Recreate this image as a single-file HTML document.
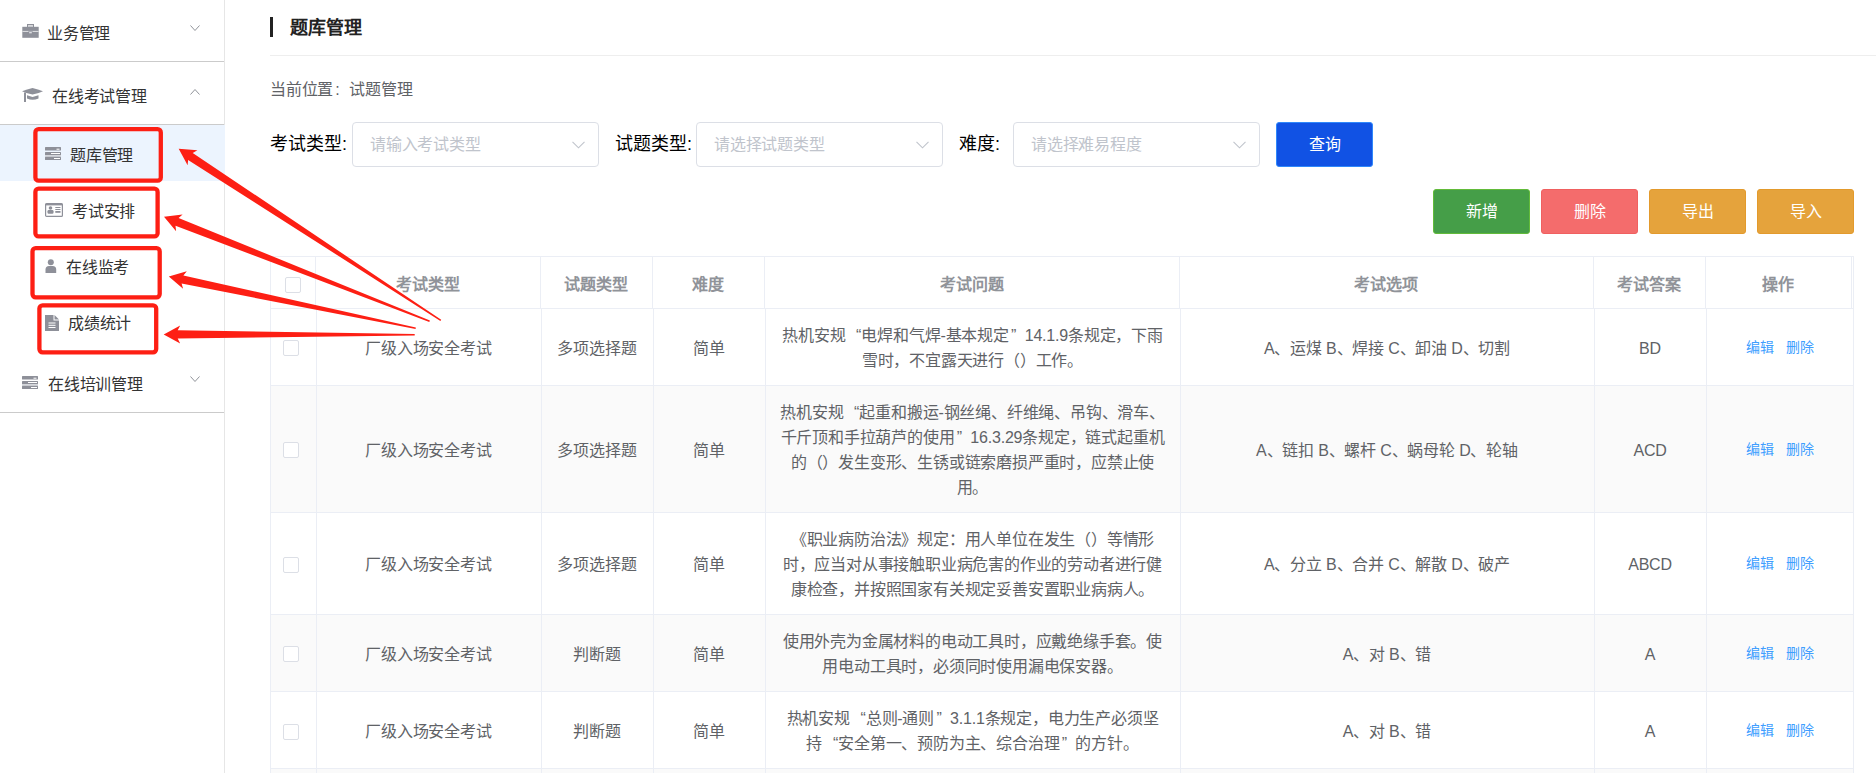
<!DOCTYPE html><html lang="zh-CN"><head><meta charset="utf-8"><title>题库管理</title><style>
*{margin:0;padding:0;box-sizing:border-box}
html,body{width:1876px;height:781px;overflow:hidden;background:#fff}
body{position:relative;font-family:"Liberation Sans",sans-serif;color:#333}
.a{position:absolute;white-space:nowrap}
.ln{position:absolute;background:#e6e6e6}
.t16{font-size:16px;line-height:20px}
.side{color:#333;font-size:16px;line-height:20px;letter-spacing:-0.25px}
.lab{font-size:18px;color:#000;line-height:24px}
.inp{position:absolute;top:122px;height:45px;width:247px;border:1px solid #dcdfe6;border-radius:4px;background:#fff}
.inp span{position:absolute;left:17px;top:12px;letter-spacing:-0.2px;font-size:16px;line-height:20px;color:#c0c4cc}
.inp svg{position:absolute;right:13px;top:18px}
.btn{position:absolute;color:#fff;font-size:16px;line-height:20px;text-align:center;border-radius:3px}
.th{position:absolute;font-size:16px;font-weight:bold;color:#909399;line-height:25px;text-align:center}
.td{position:absolute;font-size:16px;color:#606266;line-height:25px;text-align:center;white-space:nowrap;letter-spacing:-0.2px}
.hl{position:absolute;height:1px;background:#ebeef5}
.vl{position:absolute;width:1px;background:#ebeef5}
.cb{position:absolute;width:16px;height:16px;border:1px solid #dcdfe6;border-radius:2px;background:#fff}
.op{position:absolute;font-size:14px;line-height:18px;color:#409eff}
.q{display:inline-block;width:16px;letter-spacing:0}
.qr{position:relative;left:-3px}
.ql{text-align:right}
</style></head><body>
<div class="ln" style="left:224px;top:0;width:1px;height:773px;background:#e6e6e6"></div>
<div class="ln" style="left:0;top:61px;width:224px;height:1px;background:#cbcbcb"></div>
<div class="ln" style="left:0;top:124px;width:224px;height:1px;background:#cbcbcb"></div>
<div class="ln" style="left:0;top:125px;width:225px;height:56px;background:#ecf4fe"></div>
<div class="ln" style="left:0;top:412px;width:224px;height:1px;background:#cbcbcb"></div>
<svg class="a" style="left:22px;top:24px" width="17" height="14" viewBox="0 0 17 14"><path d="M5 0 H12 V3 H10.8 V1.2 H6.2 V3 H5z" fill="#8e9099"/><rect x="6.2" y="1.2" width="4.6" height="1.8" fill="#d8d9dc"/><rect x="0.3" y="2.8" width="16.4" height="11" fill="#8e9099"/><rect x="0.3" y="6.9" width="16.4" height="1.1" fill="#d9dadd"/><rect x="6.2" y="7.4" width="4.6" height="2.6" fill="#8e9099"/><rect x="7.2" y="8.1" width="2.6" height="1.2" fill="#e6e7ea"/></svg>
<div class="a side" style="left:47px;top:24px">业务管理</div>
<svg class="a" style="left:190px;top:25px" width="10" height="6" viewBox="0 0 10 6"><path d="M0.5 0.5 L5.0 5.5 L9.5 0.5" fill="none" stroke="#909399" stroke-width="1"/></svg>
<svg class="a" style="left:22px;top:87px" width="22" height="16" viewBox="0 0 22 16"><path d="M10.5 1 Q16 2.5 21 4.2 Q16 6.6 10.5 7.6 Q5 6.6 0 4.2 Q5 2.5 10.5 1z" fill="#8e9099"/><path d="M5 8.2 L10.5 10 L16.5 8.2 V11.5 Q10.5 14 5 11.5z" fill="#8e9099"/><rect x="2" y="5.5" width="2" height="9.5" fill="#8e9099"/></svg>
<div class="a side" style="left:52px;top:87px">在线考试管理</div>
<svg class="a" style="left:190px;top:89px" width="10" height="6" viewBox="0 0 10 6"><path d="M0.5 5.5 L5.0 0.5 L9.5 5.5" fill="none" stroke="#909399" stroke-width="1"/></svg>
<svg class="a" style="left:45px;top:147px" width="16" height="13" viewBox="0 0 16 13"><rect x="0" y="0" width="16" height="3.6" rx="0.5" fill="#8e9099"/><rect x="0" y="5" width="16" height="3" rx="0.5" fill="#8e9099"/><rect x="0" y="8" width="16" height="1.8" fill="#d5d7dc"/><rect x="0" y="9.8" width="16" height="3.2" rx="0.5" fill="#8e9099"/><rect x="11.5" y="1.7" width="3" height="1" fill="#fff"/><rect x="6.0" y="6" width="9" height="1" fill="#fff"/><rect x="9.0" y="11" width="6" height="1" fill="#fff"/></svg>
<div class="a side" style="left:70px;top:146px">题库管理</div>
<svg class="a" style="left:45px;top:203px" width="18" height="14" viewBox="0 0 18 14"><rect x="0.6" y="0.6" width="16.8" height="12.8" rx="1" fill="none" stroke="#8e9099" stroke-width="1.2"/><rect x="0.6" y="0.6" width="16.8" height="1.8" fill="#8e9099"/><circle cx="5.5" cy="5" r="1.8" fill="#8e9099"/><rect x="2.5" y="7" width="6" height="3.8" rx="1.2" fill="#8e9099"/><rect x="10.3" y="4" width="5.2" height="1" fill="#8e9099"/><rect x="10.3" y="6" width="5.2" height="1" fill="#8e9099"/><rect x="10.3" y="8" width="5.2" height="1.8" fill="#8e9099"/></svg>
<div class="a side" style="left:72px;top:202px">考试安排</div>
<svg class="a" style="left:45px;top:259px" width="12" height="14" viewBox="0 0 12 14"><circle cx="5.8" cy="3.2" r="3" fill="#8e9099"/><path d="M0.5 14 V10.5 Q0.5 7 4 7 H7.6 Q11.2 7 11.2 10.5 V14z" fill="#8e9099"/></svg>
<div class="a side" style="left:66px;top:258px">在线监考</div>
<svg class="a" style="left:45px;top:315px" width="14" height="16" viewBox="0 0 14 16"><path d="M0 0 H8.5 V5.5 H14 V16 H0z" fill="#8e9099"/><path d="M9.5 0 L14 4.5 H9.5z" fill="#8e9099"/><rect x="3.5" y="7.5" width="7" height="1" fill="#fff"/><rect x="3.5" y="9.8" width="7" height="1" fill="#fff"/><rect x="3.5" y="12" width="7" height="1" fill="#fff"/></svg>
<div class="a side" style="left:68px;top:314px">成绩统计</div>
<svg class="a" style="left:22px;top:376px" width="16" height="13" viewBox="0 0 16 13"><rect x="0" y="0" width="16" height="3.6" rx="0.5" fill="#8e9099"/><rect x="0" y="5" width="16" height="3" rx="0.5" fill="#8e9099"/><rect x="0" y="8" width="16" height="1.8" fill="#d5d7dc"/><rect x="0" y="9.8" width="16" height="3.2" rx="0.5" fill="#8e9099"/><rect x="11.5" y="1.7" width="3" height="1" fill="#fff"/><rect x="6.0" y="6" width="9" height="1" fill="#fff"/><rect x="9.0" y="11" width="6" height="1" fill="#fff"/></svg>
<div class="a side" style="left:48px;top:375px">在线培训管理</div>
<svg class="a" style="left:190px;top:376px" width="10" height="6" viewBox="0 0 10 6"><path d="M0.5 0.5 L5.0 5.5 L9.5 0.5" fill="none" stroke="#909399" stroke-width="1"/></svg>
<div class="ln" style="left:270px;top:17px;width:3px;height:20px;background:#222"></div>
<div class="a" style="left:290px;top:16px;font-size:18px;line-height:24px;font-weight:bold;color:#222">题库管理</div>
<div class="ln" style="left:270px;top:55px;width:1606px;height:1px;background:#eeeeee"></div>
<div class="a t16" style="left:270px;top:80px;color:#606266;letter-spacing:-0.2px">当前位置<span style="display:inline-block;width:16px;padding-left:2px">:</span>试题管理</div>
<div class="a lab" style="left:270px;top:132px">考试类型:</div>
<div class="inp" style="left:352px"><span>请输入考试类型</span><svg width="13" height="8" viewBox="0 0 13 8"><path d="M0.5 0.8 L6.5 6.8 L12.5 0.8" fill="none" stroke="#c0c4cc" stroke-width="1.1"/></svg></div>
<div class="a lab" style="left:615px;top:132px">试题类型:</div>
<div class="inp" style="left:696px"><span>请选择试题类型</span><svg width="13" height="8" viewBox="0 0 13 8"><path d="M0.5 0.8 L6.5 6.8 L12.5 0.8" fill="none" stroke="#c0c4cc" stroke-width="1.1"/></svg></div>
<div class="a lab" style="left:959px;top:132px">难度:</div>
<div class="inp" style="left:1013px"><span>请选择难易程度</span><svg width="13" height="8" viewBox="0 0 13 8"><path d="M0.5 0.8 L6.5 6.8 L12.5 0.8" fill="none" stroke="#c0c4cc" stroke-width="1.1"/></svg></div>
<div class="btn" style="left:1276px;top:122px;width:97px;height:45px;background:#1152e4;border:1px solid #2f88fb;line-height:43px">查询</div>
<div class="btn" style="left:1433px;top:189px;width:97px;height:45px;background:#459e48;border:1px solid #62bb3a;line-height:43px">新增</div>
<div class="btn" style="left:1541px;top:189px;width:97px;height:45px;background:#f46c6c;border:1px solid #f06060;line-height:43px">删除</div>
<div class="btn" style="left:1649px;top:189px;width:97px;height:45px;background:#e5a33c;border:1px solid #e39a2c;line-height:43px">导出</div>
<div class="btn" style="left:1757px;top:189px;width:97px;height:45px;background:#e5a33c;border:1px solid #e39a2c;line-height:43px">导入</div>
<div class="ln" style="left:271px;top:386px;width:1582px;height:126px;background:#fafafa"></div>
<div class="ln" style="left:271px;top:615px;width:1582px;height:76px;background:#fafafa"></div>
<div class="ln" style="left:271px;top:769px;width:1582px;height:4px;background:#fafafa"></div>
<div class="hl" style="left:270px;top:256px;width:1584px"></div>
<div class="hl" style="left:270px;top:308px;width:1584px"></div>
<div class="hl" style="left:270px;top:385px;width:1584px"></div>
<div class="hl" style="left:270px;top:512px;width:1584px"></div>
<div class="hl" style="left:270px;top:614px;width:1584px"></div>
<div class="hl" style="left:270px;top:691px;width:1584px"></div>
<div class="hl" style="left:270px;top:768px;width:1584px"></div>
<div class="vl" style="left:270px;top:308px;height:465px"></div>
<div class="vl" style="left:316px;top:308px;height:465px"></div>
<div class="vl" style="left:541px;top:308px;height:465px"></div>
<div class="vl" style="left:653px;top:308px;height:465px"></div>
<div class="vl" style="left:765px;top:308px;height:465px"></div>
<div class="vl" style="left:1180px;top:308px;height:465px"></div>
<div class="vl" style="left:1594px;top:308px;height:465px"></div>
<div class="vl" style="left:1706px;top:308px;height:465px"></div>
<div class="vl" style="left:1853px;top:308px;height:465px"></div>
<div class="vl" style="left:270px;top:256px;height:52px"></div>
<div class="vl" style="left:315px;top:256px;height:52px"></div>
<div class="vl" style="left:540px;top:256px;height:52px"></div>
<div class="vl" style="left:652px;top:256px;height:52px"></div>
<div class="vl" style="left:764px;top:256px;height:52px"></div>
<div class="vl" style="left:1179px;top:256px;height:52px"></div>
<div class="vl" style="left:1593px;top:256px;height:52px"></div>
<div class="vl" style="left:1705px;top:256px;height:52px"></div>
<div class="vl" style="left:1851px;top:256px;height:52px"></div>
<div class="vl" style="left:1853px;top:256px;height:52px"></div>
<div class="cb" style="left:285px;top:277px"></div>
<div class="th" style="left:315px;top:272px;width:225px">考试类型</div>
<div class="th" style="left:540px;top:272px;width:112px">试题类型</div>
<div class="th" style="left:652px;top:272px;width:112px">难度</div>
<div class="th" style="left:764px;top:272px;width:415px">考试问题</div>
<div class="th" style="left:1179px;top:272px;width:414px">考试选项</div>
<div class="th" style="left:1593px;top:272px;width:112px">考试答案</div>
<div class="th" style="left:1705px;top:272px;width:146px">操作</div>
<div class="cb" style="left:283px;top:340px"></div>
<div class="td" style="left:316px;top:335.5px;width:225px">厂级入场安全考试</div>
<div class="td" style="left:541px;top:335.5px;width:112px">多项选择题</div>
<div class="td" style="left:653px;top:335.5px;width:112px">简单</div>
<div class="td" style="left:765px;top:323.0px;width:415px">热机安规<span class="q ql">“</span>电焊和气焊-基本规定<span class="q qr">”</span>14.1.9条规定，下雨<br>雪时，不宜露天进行（）工作。</div>
<div class="td" style="left:1180px;top:335.5px;width:414px">A、运煤 B、焊接 C、卸油 D、切割</div>
<div class="td" style="left:1594px;top:335.5px;width:112px">BD</div>
<div class="op" style="left:1746px;top:337.5px">编辑</div>
<div class="op" style="left:1786px;top:337.5px">删除</div>
<div class="cb" style="left:283px;top:442px"></div>
<div class="td" style="left:316px;top:437.5px;width:225px">厂级入场安全考试</div>
<div class="td" style="left:541px;top:437.5px;width:112px">多项选择题</div>
<div class="td" style="left:653px;top:437.5px;width:112px">简单</div>
<div class="td" style="left:765px;top:400.0px;width:415px">热机安规<span class="q ql">“</span>起重和搬运-钢丝绳、纤维绳、吊钩、滑车、<br>千斤顶和手拉葫芦的使用<span class="q qr">”</span>16.3.29条规定，链式起重机<br>的（）发生变形、生锈或链索磨损严重时，应禁止使<br>用。</div>
<div class="td" style="left:1180px;top:437.5px;width:414px">A、链扣 B、螺杆 C、蜗母轮 D、轮轴</div>
<div class="td" style="left:1594px;top:437.5px;width:112px">ACD</div>
<div class="op" style="left:1746px;top:439.5px">编辑</div>
<div class="op" style="left:1786px;top:439.5px">删除</div>
<div class="cb" style="left:283px;top:557px"></div>
<div class="td" style="left:316px;top:552.0px;width:225px">厂级入场安全考试</div>
<div class="td" style="left:541px;top:552.0px;width:112px">多项选择题</div>
<div class="td" style="left:653px;top:552.0px;width:112px">简单</div>
<div class="td" style="left:765px;top:527.0px;width:415px">《职业病防治法》规定：用人单位在发生（）等情形<br>时，应当对从事接触职业病危害的作业的劳动者进行健<br>康检查，并按照国家有关规定妥善安置职业病病人。</div>
<div class="td" style="left:1180px;top:552.0px;width:414px">A、分立 B、合并 C、解散 D、破产</div>
<div class="td" style="left:1594px;top:552.0px;width:112px">ABCD</div>
<div class="op" style="left:1746px;top:554.0px">编辑</div>
<div class="op" style="left:1786px;top:554.0px">删除</div>
<div class="cb" style="left:283px;top:646px"></div>
<div class="td" style="left:316px;top:641.5px;width:225px">厂级入场安全考试</div>
<div class="td" style="left:541px;top:641.5px;width:112px">判断题</div>
<div class="td" style="left:653px;top:641.5px;width:112px">简单</div>
<div class="td" style="left:765px;top:629.0px;width:415px">使用外壳为金属材料的电动工具时，应戴绝缘手套。使<br>用电动工具时，必须同时使用漏电保安器。</div>
<div class="td" style="left:1180px;top:641.5px;width:414px">A、对 B、错</div>
<div class="td" style="left:1594px;top:641.5px;width:112px">A</div>
<div class="op" style="left:1746px;top:643.5px">编辑</div>
<div class="op" style="left:1786px;top:643.5px">删除</div>
<div class="cb" style="left:283px;top:724px"></div>
<div class="td" style="left:316px;top:718.5px;width:225px">厂级入场安全考试</div>
<div class="td" style="left:541px;top:718.5px;width:112px">判断题</div>
<div class="td" style="left:653px;top:718.5px;width:112px">简单</div>
<div class="td" style="left:765px;top:706.0px;width:415px">热机安规<span class="q ql">“</span>总则-通则<span class="q qr">”</span>3.1.1条规定，电力生产必须坚<br>持<span class="q ql">“</span>安全第一、预防为主、综合治理<span class="q qr">”</span>的方针。</div>
<div class="td" style="left:1180px;top:718.5px;width:414px">A、对 B、错</div>
<div class="td" style="left:1594px;top:718.5px;width:112px">A</div>
<div class="op" style="left:1746px;top:720.5px">编辑</div>
<div class="op" style="left:1786px;top:720.5px">删除</div>
<svg class="a" style="left:0;top:0" width="1876" height="781" viewBox="0 0 1876 781"><rect x="35.4" y="129.2" width="125.4" height="51.4" rx="3.2" fill="none" stroke="#fd1f14" stroke-width="4.3"/><rect x="35.4" y="188.7" width="122.2" height="47.7" rx="3.2" fill="none" stroke="#fd1f14" stroke-width="4.3"/><rect x="32.5" y="248.2" width="127.2" height="49.1" rx="3.2" fill="none" stroke="#fd1f14" stroke-width="4.3"/><rect x="39.4" y="305.3" width="116.8" height="47.0" rx="3.2" fill="none" stroke="#fd1f14" stroke-width="4.3"/><g fill="#fd1f14"><polygon points="178.7,148.7 187.6,165.3 188.1,159.9 440.4,321.0 441.2,319.8 192.7,152.9 197.4,150.2"/><polygon points="164.0,216.8 176.1,231.2 175.5,225.8 429.3,321.9 429.9,320.5 178.6,218.0 182.6,214.5"/><polygon points="168.8,276.6 183.1,288.8 181.6,283.6 415.6,329.0 415.8,327.6 183.4,275.4 186.8,271.2"/><polygon points="163.7,334.4 180.2,343.4 177.7,338.6 414.7,335.4 414.7,334.0 177.7,330.2 180.2,325.4"/></g></svg>
</body></html>
